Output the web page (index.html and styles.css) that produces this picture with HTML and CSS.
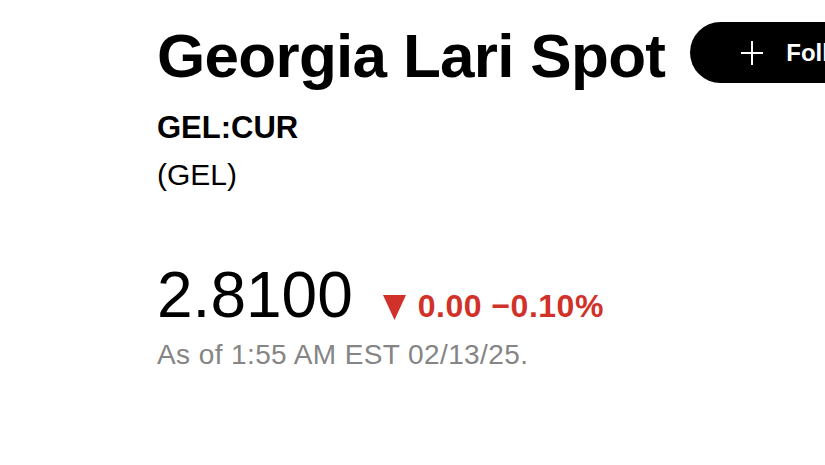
FILE: index.html
```html
<!DOCTYPE html>
<html lang="en">
<head>
  <meta charset="UTF-8">
  <title>Georgia Lari Spot</title>
  <link rel="stylesheet" href="styles.css">
</head>
<body>
  <div class="quote">
    <div class="quote-header">
      <h1 class="quote-name">Georgia Lari Spot</h1>
      <button class="follow-button">
        <svg class="follow-icon" width="22" height="24" viewBox="0 0 22 24"><path d="M11 0V24M0 12H22" stroke="#fff" stroke-width="2"/></svg>
        <span>Follow</span>
      </button>
    </div>

    <div class="ticker">GEL:CUR</div>
    <div class="currency">(GEL)</div>

    <div class="price-row">
      <span class="price">2.8100</span>
      <span class="change">
        <svg class="change-arrow" width="23" height="25" viewBox="0 0 23 25"><path d="M0 0H23L11.5 25Z" fill="#d0322a"/></svg>
        <span>0.00 −0.10%</span>
      </span>
    </div>
    <div class="timestamp">As of 1:55 AM EST 02/13/25.</div>
  </div>
</body>
</html>
```

FILE: styles.css
```css
body {
  margin: 0;
  padding: 0;
  background-color: white;
  font-family: "Liberation Sans", Arial, sans-serif;
  color: #000;
  overflow: hidden;
}

.quote {
  padding: 22px 0 0 157px;
}

.quote-header {
  display: flex;
  align-items: flex-start;
  gap: 25px;
  white-space: nowrap;
}

.quote-name {
  margin: 3px 0 0 0;
  font-size: 62px;
  line-height: 62px;
  font-weight: bold;
  letter-spacing: -0.7px;
}

.follow-button {
  display: flex;
  align-items: center;
  gap: 23px;
  height: 61px;
  padding: 0 40px 0 51px;
  border: none;
  border-radius: 31px;
  background-color: #000;
  color: #fff;
  font-family: inherit;
  font-size: 24px;
  font-weight: bold;
  flex-shrink: 0;
}

.follow-icon {
  display: block;
}

.ticker {
  margin-top: 17px;
  font-size: 31px;
  line-height: 47px;
  font-weight: bold;
}

.currency {
  font-size: 30px;
  line-height: 47px;
}

.price-row {
  display: flex;
  align-items: baseline;
  gap: 30px;
  margin-top: 65px;
}

.price {
  font-size: 64px;
  line-height: 64px;
}

.change {
  display: flex;
  align-items: baseline;
  gap: 12px;
  color: #d0322a;
  font-size: 32px;
  font-weight: bold;
  letter-spacing: 0.5px;
}

.change-arrow {
  align-self: center;
  margin-top: 2px;
}

.timestamp {
  margin-top: 14px;
  font-size: 28px;
  line-height: 28px;
  letter-spacing: 0.4px;
  color: #858585;
}
```
